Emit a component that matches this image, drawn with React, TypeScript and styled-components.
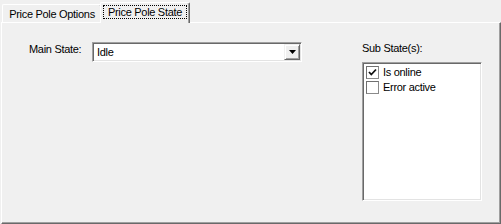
import React from "react";
import styled, { createGlobalStyle } from "styled-components";

const Global = createGlobalStyle`
  html, body { margin: 0; padding: 0; background: #f0f0f0; }
  body { font-family: "Liberation Sans", Arial, sans-serif; font-size: 11px; letter-spacing: -0.3px; color: #000; }
`;

const Window = styled.div`
  width: 501px;
  height: 224px;
  display: flex;
  flex-direction: column;
  background: #f0f0f0;
  overflow: hidden;
`;

const TabStrip = styled.div`
  height: 22px;
  display: flex;
  align-items: flex-end;
  padding-left: 2px;
  flex-shrink: 0;
`;

const Tab = styled.div<{ $selected?: boolean; $width: number }>`
  box-sizing: border-box;
  width: ${(p) => p.$width}px;
  height: ${(p) => (p.$selected ? 21 : 18)}px;
  margin: ${(p) => (p.$selected ? "0 -2px -1px -2px" : "0")};
  position: relative;
  z-index: ${(p) => (p.$selected ? 1 : 0)};
  background: #f0f0f0;
  border-top: 1px solid #ffffff;
  border-left: 1px solid #ffffff;
  border-right: 1px solid #696969;
  border-top-left-radius: 2px;
  border-top-right-radius: 2px;
  box-shadow: inset -1px 0 0 #a0a0a0;
  display: flex;
  justify-content: center;
  align-items: flex-start;
  padding-top: ${(p) => (p.$selected ? 2 : 3)}px;
  line-height: 13px;
  white-space: nowrap;
`;

const FocusBox = styled.span`
  display: inline-block;
  border: 1px dotted #000;
  padding: 0 4px;
  line-height: 12px;
`;

const Panel = styled.div`
  flex: 1;
  margin-left: 1px;
  box-sizing: border-box;
  border-top: 1px solid #ffffff;
  border-left: 1px solid #ffffff;
  border-right: 1px solid #696969;
  border-bottom: 1px solid #696969;
  box-shadow: inset -1px -1px 0 #a0a0a0;
  display: flex;
  align-items: flex-start;
  padding: 19px 18px 0 27px;
`;

const LeftGroup = styled.div`
  display: flex;
  align-items: flex-start;
`;

const Label = styled.div<{ $width?: number }>`
  width: ${(p) => (p.$width ? `${p.$width}px` : "auto")};
  line-height: 13px;
  padding-top: 1px;
  white-space: nowrap;
`;

const Combo = styled.div`
  box-sizing: border-box;
  width: 210px;
  height: 20px;
  background: #fff;
  border-top: 1px solid #a0a0a0;
  border-left: 1px solid #a0a0a0;
  border-right: 1px solid #ffffff;
  border-bottom: 1px solid #ffffff;
  box-shadow: inset 1px 1px 0 #696969, inset -1px -1px 0 #e3e3e3;
  padding: 1px;
  display: flex;
`;

const ComboText = styled.div`
  flex: 1;
  padding-left: 3px;
  line-height: 16px;
  height: 16px;
`;

const DropButton = styled.div`
  box-sizing: border-box;
  width: 16px;
  height: 16px;
  background: #f0f0f0;
  border-top: 1px solid #f0f0f0;
  border-left: 1px solid #f0f0f0;
  border-right: 1px solid #696969;
  border-bottom: 1px solid #696969;
  box-shadow: inset 1px 1px 0 #ffffff, inset -1px -1px 0 #a0a0a0;
  display: flex;
  align-items: center;
  justify-content: center;
`;

const RightGroup = styled.div`
  margin-left: auto;
  display: flex;
  flex-direction: column;
  gap: 7px;
  margin-top: -1px;
`;

const ListBox = styled.div`
  box-sizing: border-box;
  width: 120px;
  height: 139px;
  background: #fff;
  border-top: 1px solid #a0a0a0;
  border-left: 1px solid #a0a0a0;
  border-right: 1px solid #ffffff;
  border-bottom: 1px solid #ffffff;
  box-shadow: inset 1px 1px 0 #696969, inset -1px -1px 0 #e3e3e3;
  padding: 2px 2px 0 3px;
  display: flex;
  flex-direction: column;
`;

const Item = styled.div`
  height: 15px;
  display: flex;
  align-items: center;
  gap: 4px;
  line-height: 13px;
  white-space: nowrap;
`;

const Box = styled.span`
  box-sizing: border-box;
  width: 13px;
  height: 13px;
  background: #fff;
  border: 1px solid #8a8a8a;
  border-top-color: #707070;
  border-left-color: #707070;
  display: inline-flex;
  align-items: center;
  justify-content: center;
  flex-shrink: 0;
`;

const items = [
  { label: "Is online", checked: true },
  { label: "Error active", checked: false },
];

export default function App() {
  return (
    <>
      <Global />
      <Window>
        <TabStrip>
          <Tab $width={100}>Price Pole Options</Tab>
          <Tab $width={90} $selected>
            <FocusBox>Price Pole State</FocusBox>
          </Tab>
        </TabStrip>
        <Panel>
          <LeftGroup>
            <Label $width={63}>Main State:</Label>
            <Combo>
              <ComboText>Idle</ComboText>
              <DropButton>
                <svg width="7" height="4" viewBox="0 0 7 4">
                  <path d="M0 0 H7 L3.5 4 Z" fill="#000" />
                </svg>
              </DropButton>
            </Combo>
          </LeftGroup>
          <RightGroup>
            <Label>Sub State(s):</Label>
            <ListBox>
              {items.map((it) => (
                <Item key={it.label}>
                  <Box>
                    {it.checked && (
                      <svg width="11" height="11" viewBox="0 0 11 11">
                        <path d="M2 5 L4.3 7.5 L9 2.5" fill="none" stroke="#111" strokeWidth="1.8" />
                      </svg>
                    )}
                  </Box>
                  {it.label}
                </Item>
              ))}
            </ListBox>
          </RightGroup>
        </Panel>
      </Window>
    </>
  );
}
